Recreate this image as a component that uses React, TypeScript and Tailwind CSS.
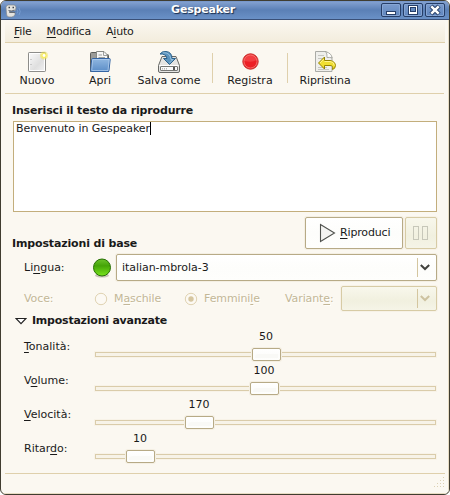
import React from "react";

function Label({ text, k }: { text: string; k: number }) {
  return (
    <span className="whitespace-pre">
      {text.slice(0, k)}
      <span className="underline decoration-1 underline-offset-2 [text-decoration-skip-ink:none]">{text[k]}</span>
      {text.slice(k + 1)}
    </span>
  );
}

function TitleBar() {
  const button =
    "h-[14px] w-5 rounded-[2px] border border-[#263e68] bg-gradient-to-b from-[#7b9bcc] to-[#5f86bf] shadow-[inset_0_0_0_1px_#86a5d4]";
  return (
    <div className="relative flex h-[19px] shrink-0 items-start justify-center border-b border-[#3a5078] bg-gradient-to-b from-[#87a4d2] via-[#5b80b6] via-50% to-[#6a91c7] shadow-[inset_0_1px_0_#7898cb]">
      <svg className="absolute left-[4px] top-[3px]" width="18" height="14" viewBox="0 0 18 14">
        <path d="M1 3.500Q1 1 3.500 1H9q2 0 2 2.500l-.5 3-2.500.5H4.500v1.500H10v2q-1 2.500-3.500 2.500H4Q1.500 13 1.500 10Z" fill="#e4e3df" stroke="#7f858c" strokeWidth=".7" />
        <path d="M3.500 3.500h1.500M7.500 3.500H9" stroke="#3f454d" fill="none" strokeWidth="1.500" />
        <path d="M3.500 6.500q3 1.500 6-.5M4.500 8.500H10" stroke="#666c74" fill="none" />
        <path d="M12 5.500q1.500 2 0 4M14 4q2.500 3.500 0 7" stroke="#7ba1d6" fill="none" strokeWidth=".8" />
      </svg>
      <div className="mr-[44px] mt-[2px] font-bold leading-[13px] tracking-[-0.2px] text-white [text-shadow:1px_1px_1px_#182c4b]">Gespeaker</div>
      <div className="absolute right-[4px] top-[2px] flex gap-[2px]">
        <div className={button}>
          <svg className="-ml-px -mt-px" width="20" height="14"><rect x="5.5" y="8.5" width="9" height="3" fill="#fff" stroke="#263e68" /></svg>
        </div>
        <div className={button}>
          <svg className="-ml-px -mt-px" width="20" height="14"><rect x="5.5" y="2.5" width="9" height="9" fill="#fff" stroke="#263e68" /><rect x="7.5" y="4.5" width="5" height="4" fill="#6589bd" stroke="#263e68" /></svg>
        </div>
        <div className={button}>
          <svg className="-ml-px -mt-px" width="20" height="14"><path d="m6 3 8 8m0-8-8 8" stroke="#263e68" strokeWidth="4.5" /><path d="m6.3 3.3 7.4 7.4m0-7.4-7.4 7.4" stroke="#fff" strokeWidth="2.5" /></svg>
        </div>
      </div>
    </div>
  );
}

function NewIcon() {
  return (
    <svg width="24" height="24" viewBox="0 0 24 24">
      <defs><linearGradient id="paper" x2="1" y2="1"><stop stopColor="#fbfbfb" /><stop offset=".6" stopColor="#dfdfdf" /><stop offset="1" stopColor="#f3f3f3" /></linearGradient></defs>
      <rect x="3.5" y="2.5" width="17" height="19" rx=".7" fill="url(#paper)" stroke="#8d8d8a" />
      <rect x="4.5" y="3.5" width="15" height="17" fill="none" stroke="#fff" />
      <path d="M6 9v1m0 4v1" stroke="#aaa" />
      <circle cx="19" cy="5.500" r="4" fill="#f5e84b" opacity=".5" />
      <circle cx="19" cy="5.500" r="2.600" fill="#f8ed62" /><circle cx="19" cy="5.500" r="1.400" fill="#fff" />
    </svg>
  );
}

function OpenIcon() {
  return (
    <svg width="24" height="24" viewBox="0 0 24 24">
      <defs><linearGradient id="folder" x2="0" y2="1"><stop stopColor="#91b8e1" /><stop offset="1" stopColor="#5b8dc7" /></linearGradient></defs>
      <path d="M2.500 3.500q0-1 1-1H9l1 2h9.500q1 0 1 1v16h-18Z" fill="#9b9b98" stroke="#5d5e5a" />
      <path d="M8.500 11V1.500H16l3.500 3.500V11Z" fill="#f6f6f5" stroke="#888a85" />
      <path d="M15.500 2v3.500h3.500M10.500 5H14m-3.500 2.500H17" fill="none" stroke="#9e9f9c" />
      <path d="M4.500 8.500h17q.8 0 .7 1l-1.200 11q-.1 1-1 1H3.500q-1 0-.8-1l1-11q.1-1 .8-1Z" fill="url(#folder)" stroke="#3465a4" />
      <path d="M4.700 9.500h16.500l-1.200 11H3.700Z" fill="none" stroke="#aecbec" strokeWidth=".8" />
    </svg>
  );
}

function SaveIcon() {
  return (
    <svg width="24" height="24" viewBox="0 0 24 24">
      <path d="M5 6.500h14l3.500 9V21q0 1.500-1.500 1.500H3Q1.500 22.500 1.500 21v-5.500Z" fill="#e5e5e3" stroke="#686966" />
      <path d="M2.500 15.500h19" stroke="#fff" />
      <rect x="3.500" y="16.500" width="17" height="4" rx=".5" fill="#fafafa" stroke="#777875" />
      <path d="M5.500 18v1.500m2-1.500v1.500m2-1.500v1.500" stroke="#b8b9b6" />
      <path d="M17 17v3" stroke="#222" strokeWidth="1.500" />
      <path d="M3 4Q5 1 9 1.500q6 .5 6 7h3.500L12.500 14.500 6.500 8.500H10Q9 3.500 3 4Z" fill="#5b93bd" stroke="#2c628c" />
      <path d="M6 2.800q7-.8 8 6.700h2l-3.500 3.500" fill="none" stroke="#a2c9e3" strokeWidth=".8" />
    </svg>
  );
}

function RecordIcon() {
  return (
    <svg width="24" height="24" viewBox="0 0 24 24">
      <circle cx="12.500" cy="11.500" r="7.700" fill="#ed1f25" stroke="#c6302c" />
      <circle cx="12.500" cy="11.500" r="6.500" fill="none" stroke="#f46a67" />
      <path d="M6.500 11a6 6 0 0 1 12-1q-4 3-12 1Z" fill="#ff7775" opacity=".35" />
    </svg>
  );
}

function RevertIcon() {
  return (
    <svg width="24" height="24" viewBox="0 0 24 24">
      <path d="M2.500 1.500H13l6 6v14h-16.500Z" fill="#efefec" stroke="#aaaba6" />
      <path d="M5 5.500h6m-6 3h5m-5 9h9m-9 2h11" fill="none" stroke="#c5c6c1" />
      <path d="M12.500 1.500q2 2 1.500 6 3-.5 5 .5 0-4.500-6.500-6.500Z" fill="#fff" stroke="#999b93" strokeWidth=".8" />
      <path d="M11.500 7v3.500H17q5 .8 5.500 5-.3 3.500-3 4 1-4-2.500-4h-5.500V19L5.500 13Z" fill="#f0de32" stroke="#968300" />
      <path d="M10.800 9 7 13m4.500-1.500H17q4 0 4.300 4" fill="none" stroke="#fff48c" />
    </svg>
  );
}

function Tool({ icon, label, className }: { icon: React.ReactNode; label: string; className: string }) {
  return (
    <div className={`flex flex-col items-center ${className}`}>
      {icon}
      <span className="whitespace-nowrap leading-[13px]">{label}</span>
    </div>
  );
}

function Toolbar() {
  return (
    <div className="mx-1 flex h-[51px] shrink-0 border-b border-[#dfd0ac] pt-[7px]">
      <Tool icon={<NewIcon />} label="Nuovo" className="ml-[7px] w-[50px]" />
      <Tool icon={<OpenIcon />} label="Apri" className="ml-[13px] w-[50px]" />
      <Tool icon={<SaveIcon />} label="Salva come" className="ml-[4px] w-[80px] tracking-[-0.1px]" />
      <div className="ml-[3px] mt-[3px] h-[30px] w-px bg-[#dfd0ac]" />
      <Tool icon={<RecordIcon />} label="Registra" className="ml-[7px] w-[60px]" />
      <div className="ml-[7px] mt-[3px] h-[30px] w-px bg-[#dfd0ac]" />
      <Tool icon={<RevertIcon />} label="Ripristina" className="ml-[7px] w-[60px] tracking-[-0.1px]" />
    </div>
  );
}

function Radio({ checked }: { checked?: boolean }) {
  return (
    <svg width="14" height="14" viewBox="0 0 14 14" className="shrink-0">
      <circle cx="7" cy="7" r="5.700" fill="#fcf9f3" stroke="#dfd2b2" />
      {checked && <circle cx="7" cy="7" r="2.700" fill="#d6c6a0" />}
    </svg>
  );
}

function ComboArrow({ disabled }: { disabled?: boolean }) {
  return (
    <div className="ml-auto flex h-[19px] items-center border-l border-[#d4c69f] pl-[2px] pr-[6px]">
      <svg width="10" height="7" viewBox="0 0 10 7"><path d="m.8 1 4.200 4 4.200-4" fill="none" stroke={disabled ? "#cdc2a0" : "#42423e"} strokeWidth="2" /></svg>
    </div>
  );
}

const raised = "rounded-[2px] border border-[#b7aa86] bg-gradient-to-b from-white via-[#fdfdfb] via-50% to-[#fefefc] shadow-[0_0_0_1px_#f4efe3]";
const flat = "rounded-[2px] border border-[#d7cba5] bg-gradient-to-b from-[#f8f7ec] via-[#f1f0df] via-60% to-[#f5f4e7] shadow-[0_0_0_1px_#f7f2e7]";

const sliders = [
  { name: "Tonalità:", k: 0, value: 50, left: 157 },
  { name: "Volume:", k: 1, value: 100, left: 155 },
  { name: "Velocità:", k: 0, value: 170, left: 90 },
  { name: "Ritardo:", k: 5, value: 10, left: 31 },
];

function SliderRow({ name, k, value, left }: (typeof sliders)[number]) {
  return (
    <div className="flex h-[34px]">
      <div className="w-[71px] pt-[10px] leading-[13px]"><Label text={name} k={k} /></div>
      <div className="w-[341px]">
        <div className="w-[28px] text-center leading-[13px]" style={{ marginLeft: left }}>{value}</div>
        <div className="relative mt-[9px] h-[5px] border border-[#daccaa] bg-[#f7f3e8] shadow-[0_0_0_1px_#f8f3e8]">
          <div className={`absolute -top-[5px] -ml-px h-[13px] w-[29px] ${raised}`} style={{ left }}>
            <div className="mx-[2px] mt-[5px] h-[4px] rounded-tl bg-[#f9f9f6]" />
          </div>
        </div>
      </div>
    </div>
  );
}

export default function App() {
  return (
    <div className="h-[495px] w-[450px] bg-white font-['DejaVu_Sans',sans-serif] text-[11px] text-[#1a1a1a]">
      <div className="flex h-full flex-col overflow-hidden rounded-[6px] border border-[#403d30] bg-[#fbf8f1]">
        <TitleBar />
        <div className="flex min-h-0 flex-1 flex-col border-b border-r border-[#e7dcc3]">
          <div className="ml-1 mr-[3px] flex h-[23px] shrink-0 gap-[15px] border-b border-[#dfd0ac] bg-gradient-to-b from-[#fbf8f1] to-[#f3eddd] pl-[9px] pt-[5px] leading-[13px] tracking-[-0.2px]">
            <Label text="File" k={0} /><Label text="Modifica" k={0} /><Label text="Aiuto" k={1} />
          </div>
          <Toolbar />

          <div className="ml-[11px] mt-[10px] font-bold leading-[13px] tracking-[-0.16px]">Inserisci il testo da riprodurre</div>
          <div className="ml-3 mt-1 flex h-[91px] w-[424px] shrink-0 border border-[#c3ae7c] bg-white pl-[2px] leading-[13px] tracking-[-0.06px]">
            <span>Benvenuto in Gespeaker</span>
            <span className="h-[13px] w-px bg-black" />
          </div>

          <div className="ml-[11px] mt-[5px] flex h-8 w-[425px] shrink-0">
            <div className="mr-auto pt-5 font-bold leading-[13px] tracking-[-0.15px]">Impostazioni di base</div>
            <div className={`flex w-[98px] items-center ${raised}`}>
              <svg className="ml-[13px] mr-1" width="17" height="20" viewBox="0 0 17 20"><path d="M1.500 1.500v17L15.500 10Z" fill="#f4f4f2" stroke="#51534f" strokeWidth="1.100" /></svg>
              <div className="-mt-[2px] leading-[13px] tracking-[-0.15px]"><Label text="Riproduci" k={0} /></div>
            </div>
            <div className={`ml-[2px] flex w-8 items-center justify-center gap-[3px] pr-[2px] ${flat}`}>
              <div className="h-[14px] w-[6px] border border-[#c7c7b9]" />
              <div className="h-[14px] w-[6px] border border-[#c7c7b9]" />
            </div>
          </div>

          <div className="ml-[23px] mt-[5px] flex h-[27px] w-[413px] shrink-0 items-center">
            <div className="w-[68px] leading-[13px]"><Label text="Lingua:" k={2} /></div>
            <svg width="20" height="20" viewBox="0 0 20 20" className="mr-1 shrink-0">
              <defs><linearGradient id="lamp" x2="0" y2="1"><stop stopColor="#6cc32c" /><stop offset=".4" stopColor="#45a407" /><stop offset="1" stopColor="#79e51d" /></linearGradient></defs>
              <ellipse cx="10" cy="17.500" rx="7" ry="2" fill="#c8c5b8" />
              <circle cx="10" cy="9.500" r="8.500" fill="url(#lamp)" stroke="#287006" />
            </svg>
            <div className={`flex h-[27px] flex-1 items-center pl-[5px] ${raised}`}>
              <span className="leading-[13px] tracking-[-0.05px]">italian-mbrola-3</span><ComboArrow />
            </div>
          </div>

          <div className="ml-[23px] mt-[5px] flex h-[25px] w-[413px] shrink-0 items-center leading-[13px] tracking-[-0.1px] text-[#c3b797] [text-shadow:1px_1px_0_#fffefa]">
            <div className="w-[70px]">Voce:</div>
            <Radio /><div className="ml-[6px] w-[70px]"><Label text="Maschile" k={1} /></div>
            <Radio checked /><div className="ml-[6px] w-[81px]"><Label text="Femminile" k={7} /></div>
            <div className="w-[56px]"><Label text="Variante:" k={7} /></div>
            <div className={`flex h-[25px] flex-1 items-center ${flat}`}><ComboArrow disabled /></div>
          </div>

          <div className="ml-[14px] mt-[3px] flex h-[13px] shrink-0 items-center font-bold leading-[13px] tracking-[-0.23px]">
            <svg width="12" height="8" viewBox="0 0 12 8" className="mr-[5px]"><path d="M1 1.500h10L6 6.700Z" fill="#fff" stroke="#222" strokeWidth="1.200" /></svg>
            Impostazioni avanzate
          </div>

          <div className="ml-[23px] mt-[3px] flex shrink-0 flex-col">
            {sliders.map((s) => <SliderRow key={s.name} {...s} />)}
          </div>

          <div className="ml-1 mr-[3px] mt-[7px] flex flex-1 items-end justify-end border-t border-[#dfd0ac] pb-1">
            <svg width="12" height="12" viewBox="0 0 12 12" fill="#dcd1b4">
              {[0, 1, 2, 3].map((r) => Array.from({ length: r + 1 }, (_, c) => (
                <rect key={`${r}-${c}`} x={10 - c * 3} y={r * 3} width="1" height="1" />
              )))}
            </svg>
          </div>
        </div>
      </div>
    </div>
  );
}
